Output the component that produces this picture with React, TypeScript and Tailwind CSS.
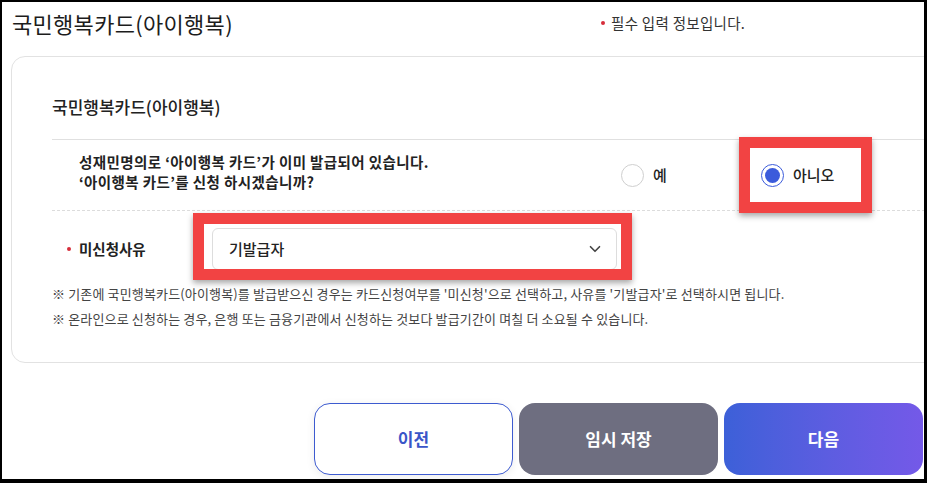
import React from 'react';
import { ChevronDown } from 'lucide-react';

const font = { fontFamily: '"Noto Sans CJK KR", "Noto Sans", sans-serif' };

function Radio({ checked, label }: { checked?: boolean; label: string }) {
  return (
    <div className="flex items-center gap-[9px]">
      {checked ? (
        <span className="w-[23px] h-[23px] rounded-full border border-[#3b5bdb] flex items-center justify-center bg-white">
          <span className="w-[15px] h-[15px] rounded-full bg-[#3b5bdb]" />
        </span>
      ) : (
        <span className="w-[23px] h-[23px] rounded-full border border-[#cfcfcf] bg-white" />
      )}
      <span className="text-[15px] text-[#222] font-medium">{label}</span>
    </div>
  );
}

export default function App() {
  return (
    <div className="w-[927px] h-[483px] bg-black pt-[2px] pl-[2px] pr-[3px] pb-[4px]" style={font}>
      <div className="h-full bg-white overflow-hidden">
        {/* header */}
        <div className="flex items-center h-[40px] pt-[2px]">
          <h1 className="w-[599px] pl-[10px] text-[22px] text-[#1c1c1c] tracking-[0.3px]">국민행복카드(아이행복)</h1>
          <p className="flex items-center gap-[6px] text-[14.5px] text-[#333] tracking-[0.3px]">
            <span className="w-[4px] h-[4px] rounded-full bg-[#d62d3a]" />
            필수 입력 정보입니다.
          </p>
        </div>

        {/* card */}
        <div className="mt-[14px] ml-[9px] w-[960px] rounded-[14px] border border-[#e2e2e2] pl-[40px] pb-[31px]">
          <div className="pt-[38px] pb-[20px] border-b border-[#e0e0e0]">
            <h2 className="text-[17px] font-medium text-[#222] leading-[24px]">국민행복카드(아이행복)</h2>
          </div>

          <div className="flex items-center h-[71px] border-b border-dashed border-[#dcdcdc]">
            <div className="w-[569px] pl-[27px] pb-[6px] text-[14.5px] font-bold text-[#222] leading-[20px] tracking-[0.4px]">
              <p>성재민명의로 ‘아이행복 카드’가 이미 발급되어 있습니다.</p>
              <p>‘아이행복 카드’를 신청 하시겠습니까?</p>
            </div>
            <div className="w-[140px]">
              <Radio label="예" />
            </div>
            <div className="relative">
              <Radio checked label="아니오" />
              <div className="absolute left-[-22px] top-[-27px] w-[133px] h-[76px] border-[11px] border-[#f24343] shadow-[0_3px_6px_rgba(0,0,0,0.35)]" />
            </div>
          </div>

          <div className="flex items-center pt-[17px]">
            <div className="w-[160px] pl-[15px] flex items-center gap-[8px] text-[14.5px] font-bold text-[#222]">
              <span className="w-[4px] h-[4px] rounded-full bg-[#d62d3a]" />
              미신청사유
            </div>
            <div className="relative">
              <div className="w-[405px] h-[42px] rounded-[6px] border border-[#dddddd] flex items-center justify-between pl-[16px] pr-[12px] text-[15px] font-medium text-[#222]">
                기발급자
                <ChevronDown size={18} strokeWidth={2.2} className="text-[#444]" />
              </div>
              <div className="absolute left-[-19px] top-[-15px] w-[439px] h-[67px] border-[11px] border-[#f24343] shadow-[0_3px_6px_rgba(0,0,0,0.35)]" />
            </div>
          </div>

          <div className="mt-[11px] text-[13px] text-[#444] leading-[25px] tracking-[0.15px]">
            <p>※ 기존에 국민행복카드(아이행복)를 발급받으신 경우는 카드신청여부를 '미신청'으로 선택하고, 사유를 '기발급자'로 선택하시면 됩니다.</p>
            <p>※ 온라인으로 신청하는 경우, 은행 또는 금융기관에서 신청하는 것보다 발급기간이 며칠 더 소요될 수 있습니다.</p>
          </div>
        </div>

        {/* buttons */}
        <div className="flex gap-[6px] pl-[312px] mt-[40px]">
          <button className="w-[199px] h-[72px] rounded-[16px] border border-[#3d5bd0] bg-white text-[#3a55c8] text-[17px] font-bold shadow-[0_2px_8px_rgba(0,0,0,0.08)]">이전</button>
          <button className="w-[199px] h-[72px] rounded-[16px] bg-[#6e6e80] text-white text-[17px] font-bold">임시 저장</button>
          <button className="w-[199px] h-[72px] rounded-[16px] bg-gradient-to-r from-[#3c60d8] to-[#7459e8] text-white text-[17px] font-bold">다음</button>
        </div>
      </div>
    </div>
  );
}
